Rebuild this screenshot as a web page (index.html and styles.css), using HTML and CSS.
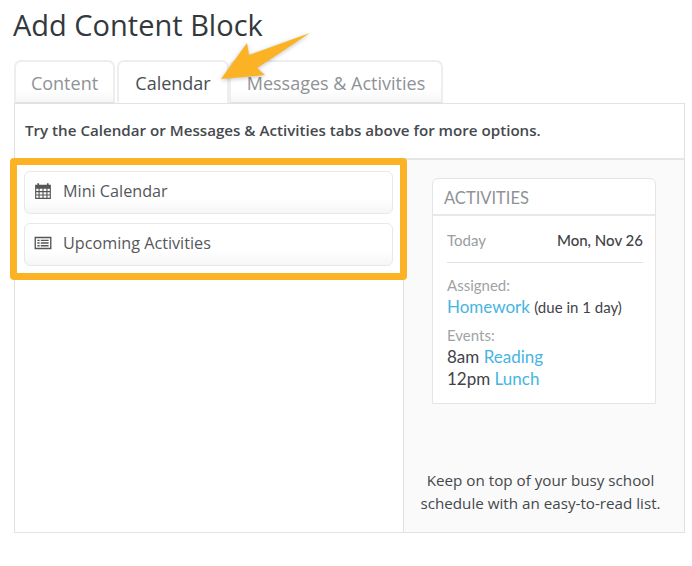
FILE: index.html
```html
<!DOCTYPE html>
<html lang="en">
<head>
<meta charset="utf-8">
<title>Add Content Block</title>
<link rel="stylesheet" href="styles.css">
</head>
<body>
<main class="page">
  <h1 class="title">Add Content Block</h1>
  <nav class="tabs">
    <div class="tab tab-content">Content</div>
    <div class="tab tab-calendar active">Calendar</div>
    <div class="tab tab-messages">Messages &amp; Activities</div>
  </nav>
  <section class="panel">
    <p class="notice">Try the Calendar or Messages &amp; Activities tabs above for more options.</p>
    <div class="columns">
      <div class="left">
        <div class="block">
          <svg class="icon" viewBox="0 0 16 16"><path fill="#555" fill-rule="evenodd" d="M1 2.500h2V1h1.500v1.500h7V1H13v1.500h2V15H1zM2 6v2h2V6zm3 0v2h2.500V6zm3.500 0v2H11V6zM12 6v2h2V6zM2 9v2h2V9zm3 0v2h2.500V9zm3.500 0v2H11V9zM12 9v2h2V9zM2 12v2h2v-2zm3 0v2h2.500v-2zm3.500 0v2H11v-2zm3.500 0v2h2v-2z"/></svg>
          <span>Mini Calendar</span>
        </div>
        <div class="block">
          <svg class="icon" viewBox="0 0 16 16"><path fill="#555" fill-rule="evenodd" d="M.5 2.500h15v11H.5zM1.700 3.700v8.600h12.600V3.700zM3 5h2v1.300H3zm3 0h7v1.300H6zM3 7.400h2v1.300H3zm3 0h7v1.300H6zM3 9.800h2v1.300H3zm3 0h7v1.300H6z"/></svg>
          <span>Upcoming Activities</span>
        </div>
      </div>
      <aside class="right">
        <div class="card">
          <div class="card-head">ACTIVITIES</div>
          <div class="card-body">
            <div class="date-row"><span class="muted">Today</span><span class="date">Mon, Nov 26</span></div>
            <div class="label label-first">Assigned:</div>
            <div class="line"><a class="link">Homework</a> <span class="due">(due in 1 day)</span></div>
            <div class="label label-second">Events:</div>
            <div class="line">8am <a class="link">Reading</a></div>
            <div class="line">12pm <a class="link">Lunch</a></div>
          </div>
        </div>
        <p class="caption">Keep on top of your busy school schedule with an easy-to-read list.</p>
      </aside>
    </div>
  </section>
  <div class="highlight"></div>
  <svg class="arrow" viewBox="0 0 110 60"><path fill="#fbb325" d="M100 3 39 25 37 13 11 49 55 45 47 38z"/></svg>
</main>
</body>
</html>
```
FILE: styles.css
```css
* { box-sizing: border-box; }
html, body { margin: 0; background: #fff; }
body { font-family: "Open Sans", sans-serif; color: #3f4347; }
.page { position: relative; width: 692px; height: 566px; padding: 6px 7px 0 14px; overflow: hidden; }
.title { margin: 0 0 0 -1px; font-size: 29px; line-height: 38px; font-weight: 400; color: #33383c; height: 54px; }
.tabs { display: flex; height: 43px; position: relative; z-index: 1; }
.tab { height: 43px; border: 2px solid #eeeeee; border-bottom: 1px solid #e2e2e2; border-radius: 7px 7px 0 0; font-size: 18px; line-height: 42px; text-align: center; color: #8f9296; background: linear-gradient(#fff 70%, #f6f6f6); }
.tab-content { width: 101px; margin-right: 2px; }
.tab-calendar { width: 112px; color: #4a4e52; border-bottom-color: #fff; background: #fff; }
.tab-messages { width: 214px; }
.panel { height: 430px; border: 1px solid #e2e2e2; display: flex; flex-direction: column; }
.notice { margin: 0; height: 56px; border-bottom: 2px solid #e6e6e6; padding: 0 0 0 10px; font-size: 15.15px; font-weight: 600; line-height: 53px; color: #45494d; }
.columns { flex: 1; display: flex; }
.left { flex: none; width: 389px; padding: 11px 10px 0 9px; display: flex; flex-direction: column; gap: 9px; border-right: 1px solid #e2e2e2; }
.block { height: 43px; display: flex; align-items: center; gap: 11px; padding: 0 0 3px 9px; border: 1px solid #e8e8e8; border-radius: 6px; background: linear-gradient(#fff 65%, #f6f6f6); font-size: 16.2px; color: #55585c; }
.icon { width: 18px; height: 18px; flex: none; }
.right { flex: 1; min-width: 0; background: #fafafa; display: flex; flex-direction: column; padding: 18px 27px 0 28px; }
.card { width: 224px; height: 226px; background: #fff; border: 1px solid #e5e5e5; border-radius: 6px 6px 0 0; font-family: Lato, sans-serif; flex: none; }
.card-head { height: 37px; border-bottom: 2px solid #e8e8e8; padding-left: 11px; font-size: 16.5px; line-height: 38px; color: #8f9296; }
.card-body { padding: 0 12px 0 14px; }
.date-row { display: flex; justify-content: space-between; height: 47px; border-bottom: 1px solid #e2e2e2; font-size: 15px; line-height: 48px; }
.muted { color: #9a9da1; }
.date { color: #3f4347; font-weight: 500; }
.label { font-size: 15px; line-height: 20px; color: #a0a3a6; }
.label-first { margin-top: 12px; margin-bottom: 1px; }
.label-second { margin-top: 7px; margin-bottom: 1px; }
.line { font-size: 17px; line-height: 22px; color: #3f4347; white-space: nowrap; }
.link { color: #45b5e2; }
.due { font-size: 15px; }
.caption { margin: 65px -9px 0 -17px; text-align: center; font-size: 15.2px; line-height: 23px; color: #44484c; }
.highlight { position: absolute; left: 10px; top: 158px; width: 397px; height: 122px; border: 7px solid #fbb325; border-radius: 4px; z-index: 2; }
.arrow { position: absolute; left: 210px; top: 30px; width: 110px; height: 60px; z-index: 3; filter: drop-shadow(0 1px 2px rgba(0,0,0,.25)); }
```
